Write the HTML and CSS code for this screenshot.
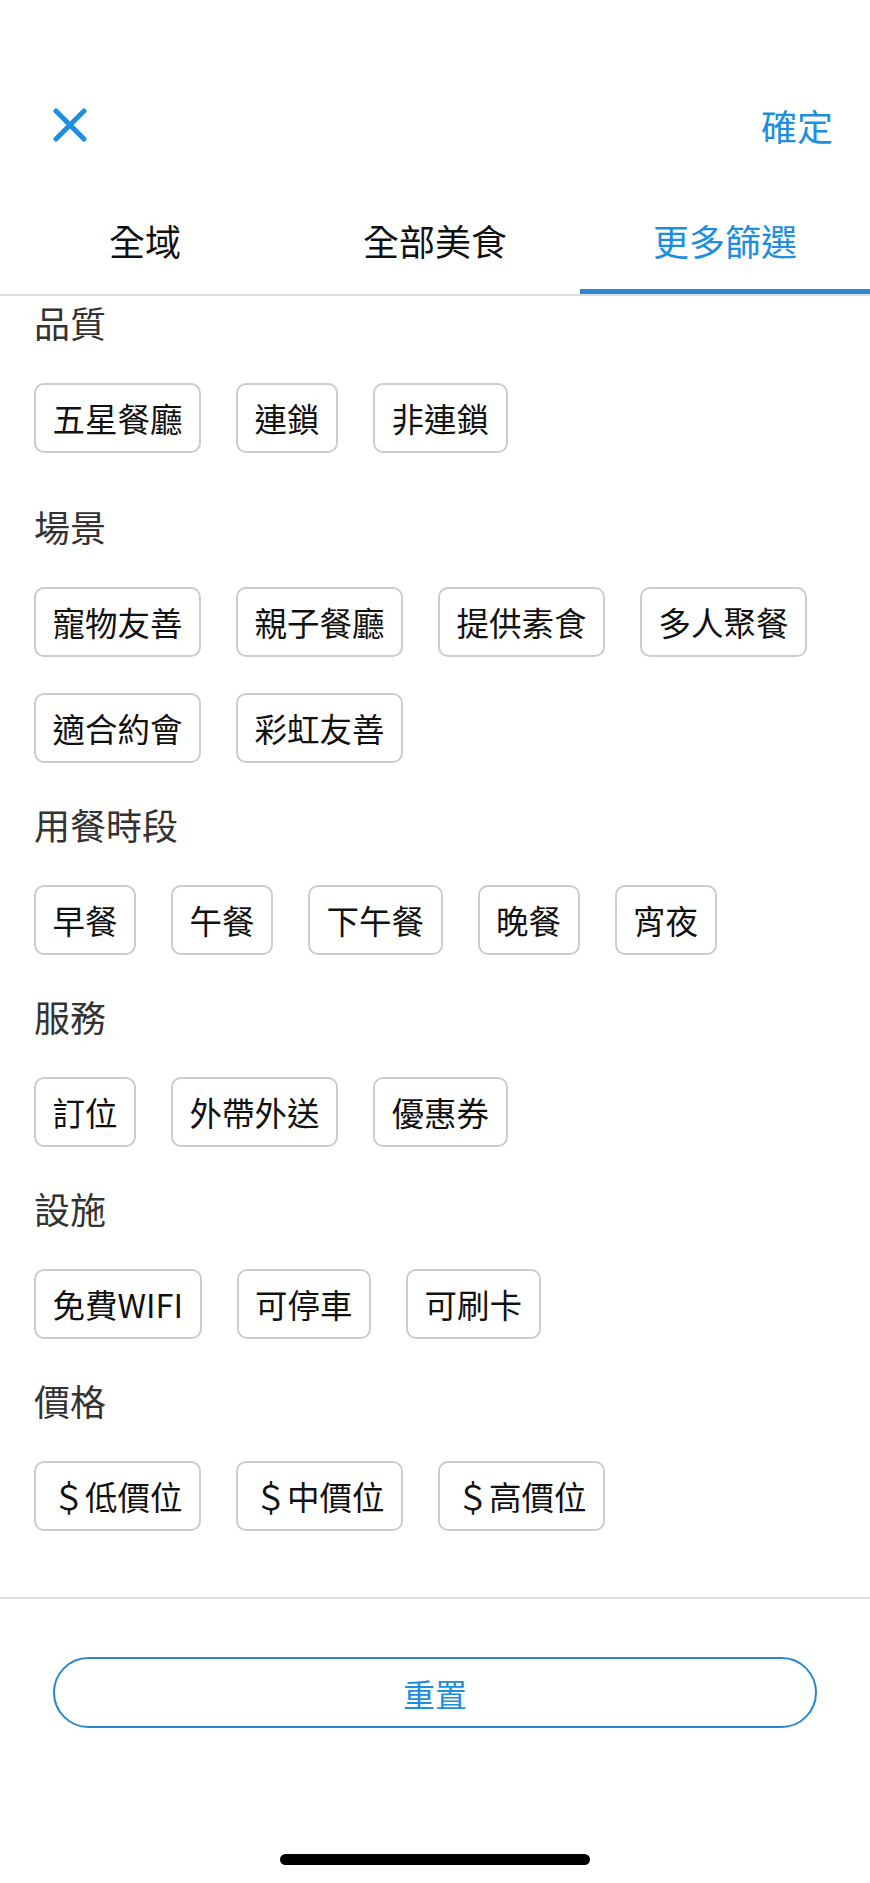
FILE: index.html
```html
<!DOCTYPE html>
<html lang="zh-Hant">

<head>
    <meta charset="UTF-8">
    <meta name="viewport" content="width=device-width, initial-scale=1.0">
    <title>更多篩選</title>
    <link rel="stylesheet" href="styles.css">
</head>

<body>
    <div class="topbar">
        <button class="close-btn" type="button" aria-label="關閉">
            <svg width="34" height="34" viewBox="0 0 34 34">
                <path d="M3 3 L31 31 M31 3 L3 31" stroke="#1e8ee0" stroke-width="5" stroke-linecap="round" fill="none" />
            </svg>
        </button>
        <button class="confirm-btn" type="button">確定</button>
    </div>

    <div class="tabs">
        <div class="tab">全域</div>
        <div class="tab">全部美食</div>
        <div class="tab active">更多篩選</div>
    </div>

    <div class="filters">
        <div class="section">
            <h2 class="section-title">品質</h2>
            <div class="chips">
                <span class="chip">五星餐廳</span>
                <span class="chip">連鎖</span>
                <span class="chip">非連鎖</span>
            </div>
        </div>

        <div class="section">
            <h2 class="section-title">場景</h2>
            <div class="chips">
                <span class="chip">寵物友善</span>
                <span class="chip">親子餐廳</span>
                <span class="chip">提供素食</span>
                <span class="chip">多人聚餐</span>
                <span class="chip">適合約會</span>
                <span class="chip">彩虹友善</span>
            </div>
        </div>

        <div class="section">
            <h2 class="section-title">用餐時段</h2>
            <div class="chips">
                <span class="chip">早餐</span>
                <span class="chip">午餐</span>
                <span class="chip">下午餐</span>
                <span class="chip">晚餐</span>
                <span class="chip">宵夜</span>
            </div>
        </div>

        <div class="section">
            <h2 class="section-title">服務</h2>
            <div class="chips">
                <span class="chip">訂位</span>
                <span class="chip">外帶外送</span>
                <span class="chip">優惠券</span>
            </div>
        </div>

        <div class="section">
            <h2 class="section-title">設施</h2>
            <div class="chips">
                <span class="chip">免費WIFI</span>
                <span class="chip">可停車</span>
                <span class="chip">可刷卡</span>
            </div>
        </div>

        <div class="section">
            <h2 class="section-title">價格</h2>
            <div class="chips">
                <span class="chip">＄低價位</span>
                <span class="chip">＄中價位</span>
                <span class="chip">＄高價位</span>
            </div>
        </div>
    </div>

    <div class="footer">
        <button class="reset-btn" type="button">重置</button>
        <div class="home-bar"></div>
    </div>
</body>

</html>
```

FILE: styles.css
```css
* {
    box-sizing: border-box;
}

body {
    margin: 0;
    font-family: "Noto Sans CJK TC", "Noto Sans", sans-serif;
    background-color: #fff;
    color: #111;
}

.topbar {
    display: flex;
    justify-content: space-between;
    align-items: center;
    height: 160px;
    padding: 90px 37px 0 53px;
}

.close-btn {
    width: 34px;
    height: 34px;
    padding: 0;
    border: none;
    background: none;
}

.close-btn svg {
    display: block;
}

.confirm-btn {
    padding: 0;
    border: none;
    background: none;
    font-family: inherit;
    font-size: 36px;
    line-height: 70px;
    color: #1e8ee0;
}

.tabs {
    display: flex;
    border-bottom: 2px solid #ddd;
}

.tab {
    flex: 1;
    text-align: center;
    font-size: 36px;
    line-height: 50px;
    padding: 55px 0 24px;
    border-bottom: 5px solid transparent;
    color: #111;
}

.tab.active {
    color: #1e8ee0;
    border-bottom-color: #2e86d6;
}

.filters {
    padding: 1px 34px 30px;
}

.section {
    padding-bottom: 36px;
}

.section:first-child {
    padding-bottom: 48px;
}

.section-title {
    margin: 0;
    font-size: 36px;
    font-weight: normal;
    line-height: 50px;
    color: #333;
}

.chips {
    display: flex;
    flex-wrap: wrap;
    gap: 36px 35px;
    margin-top: 36px;
}

.chip {
    height: 70px;
    padding: 0 16.5px;
    border: 2px solid #ccc;
    border-radius: 10px;
    font-size: 32.5px;
    line-height: 66px;
    color: #111;
}

.footer {
    border-top: 2px solid #ddd;
    padding: 58px 53px 0;
}

.reset-btn {
    display: block;
    width: 100%;
    height: 71px;
    border: 2px solid #2a87cf;
    border-radius: 36px;
    background-color: #fff;
    font-family: inherit;
    font-size: 32px;
    color: #1e8ee0;
}

.home-bar {
    width: 310px;
    height: 11px;
    margin: 126px auto 0;
    border-radius: 6px;
    background-color: #000;
}
```
